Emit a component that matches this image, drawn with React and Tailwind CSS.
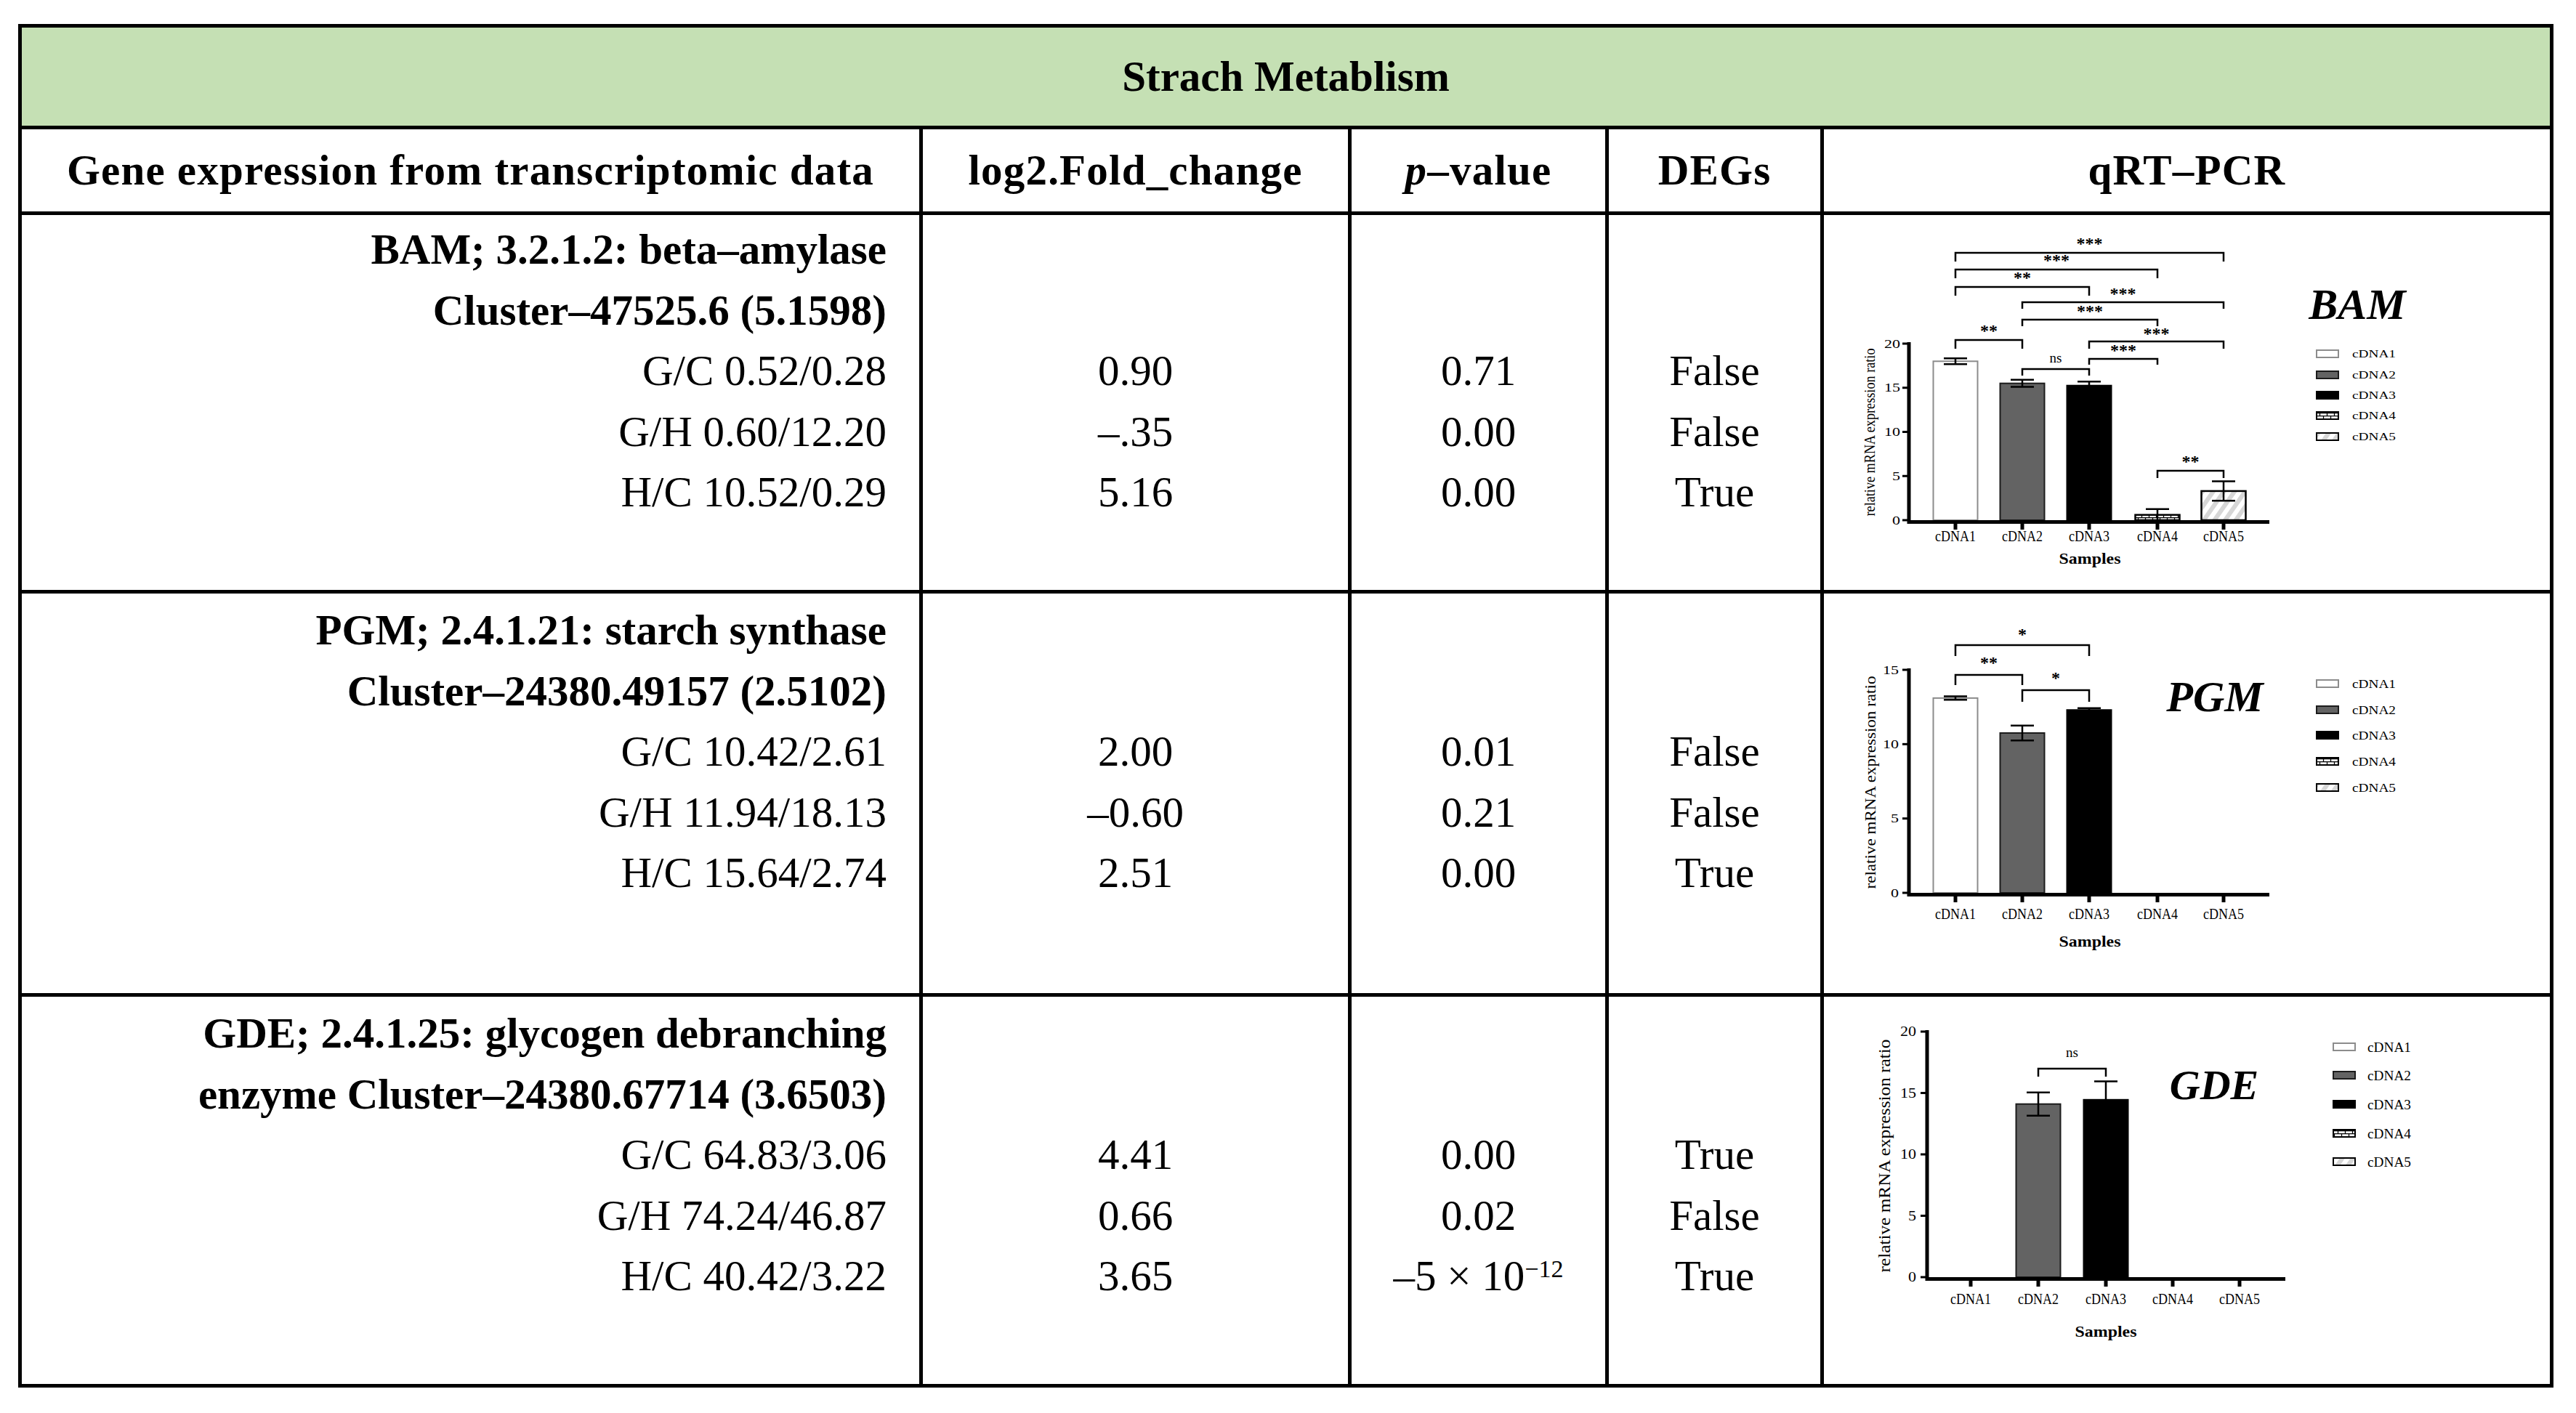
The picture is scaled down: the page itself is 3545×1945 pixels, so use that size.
const serif = "font-['Liberation_Serif',serif]"
const FONT = 'Liberation Serif, serif'

const BAM = {
  id: 'bam', top: 296, h: 516,
  axisX: 2627, xEnd: 3123, y0: 716, yMax: 473, max: 20, ticks: [0, 5, 10, 15, 20], tickRight: 2615, tickSize: 16,
  centers: [2691, 2783, 2875, 2969, 3060],
  values: [18, 15.5, 15.25, 0.6, 3.3],
  errs: [0.33, 0.4, 0.45, 0.65, 1.1],
  xLabelY: 745, labelSize: 20,
  samples: { x: 2876, y: 776, size: 21 },
  yLabel: { x: 2573, y: 595, len: 231, size: 21 },
  title: { text: 'BAM', x: 3244, y: 439, size: 60 },
  legend: { x: 3188, tx: 3237, ys: [487, 516, 544, 572, 601], size: 15 },
  brackets: [
    [0, 4, 348, 360, '***', 332],
    [0, 3, 371, 383, '***', 355],
    [0, 2, 395, 407, '**', 379],
    [1, 4, 416, 425, '***', 401],
    [1, 3, 440, 449, '***', 425],
    [0, 1, 468, 480, '**', 452],
    [2, 4, 470, 480, '***', 456],
    [2, 3, 494, 502, '***', 479],
    [1, 2, 508, 517, 'ns', 494],
    [3, 4, 648, 658, '**', 632],
  ],
}

const PGM = {
  id: 'pgm', top: 817, h: 550,
  axisX: 2627, xEnd: 3123, y0: 1229, yMax: 922, max: 15, ticks: [0, 5, 10, 15], tickRight: 2613, tickSize: 17,
  centers: [2691, 2783, 2875, 2969, 3060],
  values: [13.1, 10.75, 12.3, 0, 0],
  errs: [0.12, 0.5, 0.12, 0, 0],
  xLabelY: 1265, labelSize: 20,
  samples: { x: 2876, y: 1303, size: 21 },
  yLabel: { x: 2573, y: 1077, len: 293, size: 22 },
  title: { text: 'PGM', x: 3048, y: 979, size: 60 },
  legend: { x: 3188, tx: 3237, ys: [941, 977, 1012, 1048, 1084], size: 17 },
  brackets: [
    [0, 2, 888, 903, '*', 870],
    [0, 1, 929, 943, '**', 909],
    [1, 2, 950, 966, '*', 930],
  ],
}

const GDE = {
  id: 'gde', top: 1372, h: 533,
  axisX: 2652, xEnd: 3145, y0: 1758, yMax: 1420, max: 20, ticks: [0, 5, 10, 15, 20], tickRight: 2637, tickSize: 18,
  centers: [2712, 2805, 2898, 2990, 3082],
  values: [0, 14.1, 14.45, 0, 0],
  errs: [0, 0.95, 1.5, 0, 0],
  xLabelY: 1795, labelSize: 21,
  samples: { x: 2898, y: 1840, size: 22 },
  yLabel: { x: 2593, y: 1591, len: 321, size: 23 },
  title: { text: 'GDE', x: 3047, y: 1513, size: 58 },
  legend: { x: 3211, tx: 3258, ys: [1441, 1480, 1520, 1560, 1599], size: 19 },
  brackets: [[1, 2, 1471, 1482, 'ns', 1450]],
}

function barStyle(id, i) {
  return [
    { fill: '#ffffff', stroke: '#8c8c8c', sw: 2 },
    { fill: '#636363', stroke: '#1c1c1c', sw: 2 },
    { fill: '#000000', stroke: '#000000', sw: 2 },
    { fill: `url(#${id}-brick)`, stroke: '#000000', sw: 2.5 },
    { fill: `url(#${id}-hatch)`, stroke: '#000000', sw: 2.5 },
  ][i]
}

function BarChart({ c }) {
  const unit = (c.y0 - c.yMax) / c.max
  const yOf = (v) => c.y0 - v * unit
  const barW = 61

  return (
    <svg width={999} height={c.h} viewBox={`2510 ${c.top} 999 ${c.h}`} className="block" fontFamily={FONT}>
      <defs>
        <pattern id={`${c.id}-brick`} width="10" height="8" patternUnits="userSpaceOnUse">
          <rect width="10" height="8" fill="#ffffff" />
          <path d="M0 0.6H10M0 4.6H10M2.5 0.6V4.6M7.5 4.6V8" stroke="#000" strokeWidth="1.3" />
        </pattern>
        <pattern id={`${c.id}-hatch`} width="12" height="12" patternUnits="userSpaceOnUse" patternTransform="rotate(35)">
          <rect width="12" height="12" fill="#ffffff" />
          <rect width="6" height="12" fill="#d6d6d6" />
        </pattern>
      </defs>

      {/* bars */}
      {c.values.map((v, i) => {
        if (!v) return null
        const s = barStyle(c.id, i)
        const cx = c.centers[i]
        return (
          <rect key={i} x={cx - barW / 2} y={yOf(v)} width={barW} height={c.y0 - yOf(v)}
            fill={s.fill} stroke={s.stroke} strokeWidth={s.sw} />
        )
      })}

      {/* error bars */}
      {c.values.map((v, i) => {
        if (!v) return null
        const cx = c.centers[i]
        const hi = yOf(v + c.errs[i])
        const lo = yOf(v - c.errs[i])
        return (
          <path key={i} d={`M${cx} ${hi}V${lo}M${cx - 16} ${hi}H${cx + 16}M${cx - 16} ${lo}H${cx + 16}`}
            stroke="#000" strokeWidth="2.5" fill="none" />
        )
      })}

      {/* axes */}
      <path d={`M${c.axisX} ${c.yMax - 2}V${c.y0 + 2.5}H${c.xEnd}`} stroke="#000" strokeWidth="5" fill="none" />
      {c.ticks.map((t) => (
        <g key={t}>
          <line x1={c.axisX - 9} x2={c.axisX} y1={yOf(t)} y2={yOf(t)} stroke="#000" strokeWidth="3" />
          <text x={c.tickRight} y={yOf(t)} textAnchor="end" dominantBaseline="central" fontSize={c.tickSize}
            textLength={t >= 10 ? 22 : 11} lengthAdjust="spacingAndGlyphs">{t}</text>
        </g>
      ))}
      {c.centers.map((cx, i) => (
        <g key={i}>
          <line x1={cx} x2={cx} y1={c.y0} y2={c.y0 + 13} stroke="#000" strokeWidth="5" />
          <text x={cx} y={c.xLabelY} textAnchor="middle" fontSize={c.labelSize}
            textLength="56" lengthAdjust="spacingAndGlyphs">{`cDNA${i + 1}`}</text>
        </g>
      ))}
      <text x={c.samples.x} y={c.samples.y} textAnchor="middle" fontSize={c.samples.size} fontWeight="bold"
        textLength="85" lengthAdjust="spacingAndGlyphs">Samples</text>
      <text x={c.yLabel.x} y={c.yLabel.y} textAnchor="middle" dominantBaseline="central" fontSize={c.yLabel.size}
        transform={`rotate(-90 ${c.yLabel.x} ${c.yLabel.y})`} textLength={c.yLabel.len} lengthAdjust="spacingAndGlyphs">
        relative mRNA expression ratio
      </text>

      {/* significance brackets */}
      {c.brackets.map(([a, b, y, leg, label, ly], k) => {
        const x1 = c.centers[a]
        const x2 = c.centers[b]
        const ns = label === 'ns'
        return (
          <g key={k}>
            <path d={`M${x1} ${leg}V${y}H${x2}V${leg}`} stroke="#000" strokeWidth="2.5" fill="none" />
            <text x={(x1 + x2) / 2} y={ns ? ly + 5 : ly + 11} textAnchor="middle"
              fontSize={ns ? 19 : 24} fontWeight={ns ? 'normal' : 'bold'}>{label}</text>
          </g>
        )
      })}

      {/* gene name */}
      <text x={c.title.x} y={c.title.y} textAnchor="middle" fontSize={c.title.size} fontWeight="bold" fontStyle="italic">
        {c.title.text}
      </text>

      {/* legend */}
      {c.legend.ys.map((y, i) => {
        const s = barStyle(c.id, i)
        return (
          <g key={i}>
            <rect x={c.legend.x} y={y - 5} width="30" height="10" fill={s.fill} stroke={s.stroke} strokeWidth="2" />
            <text x={c.legend.tx} y={y} dominantBaseline="central" fontSize={c.legend.size}
              textLength="60" lengthAdjust="spacingAndGlyphs">{`cDNA${i + 1}`}</text>
          </g>
        )
      })}
    </svg>
  )
}

function Line({ children, bold }) {
  return <div className={bold ? 'h-[83.5px] font-bold whitespace-nowrap' : 'h-[83.5px] whitespace-nowrap'}>{children}</div>
}

function DataRow({ height, pt, gene, fold, pval, degs, chart, last }) {
  const cell = 'border-l-[5px] border-black text-center'
  return (
    <div className={`grid grid-cols-[1235px_590px_354px_296px_1004px] ${height} ${last ? '' : 'border-b-[5px] border-black'}`}>
      <div className={`text-right pr-[45px] ${pt}`}>
        {gene.map((g, i) => (
          <Line key={i} bold={i < 2}>{g}</Line>
        ))}
      </div>
      {[fold, pval, degs].map((col, k) => (
        <div key={k} className={`${cell} ${pt}`}>
          <Line />
          <Line />
          {col.map((v, i) => (
            <Line key={i}>{v}</Line>
          ))}
        </div>
      ))}
      <div className="border-l-[5px] border-black">
        <BarChart c={chart} />
      </div>
    </div>
  )
}

export default function App() {
  const head = 'flex items-center justify-center border-l-[5px] border-black'
  return (
    <div className={`min-h-screen bg-white text-black ${serif}`}>
      <div className="ml-[25px] pt-[33px]">
        <div className="w-[3489px] border-[5px] border-black text-[59px] leading-[83.5px]">
          {/* title */}
          <div className="h-[140px] flex items-center justify-center bg-[#c5e0b4] border-b-[5px] border-black font-bold leading-none">
            Strach Metablism
          </div>

          {/* column heads */}
          <div className="grid grid-cols-[1235px_590px_354px_296px_1004px] h-[118px] border-b-[5px] border-black leading-none font-bold tracking-[1.2px]">
            <div className="flex items-center justify-center">Gene expression from transcriptomic data</div>
            <div className={head}>log2.Fold_change</div>
            <div className={head}><i>p</i>–value</div>
            <div className={head}>DEGs</div>
            <div className={head}>qRT–PCR</div>
          </div>

          <DataRow
            height="h-[521px]"
            pt="pt-[6px]"
            gene={['BAM; 3.2.1.2: beta–amylase', 'Cluster–47525.6 (5.1598)', 'G/C 0.52/0.28', 'G/H 0.60/12.20', 'H/C 10.52/0.29']}
            fold={['0.90', '–.35', '5.16']}
            pval={['0.71', '0.00', '0.00']}
            degs={['False', 'False', 'True']}
            chart={BAM}
          />
          <DataRow
            height="h-[555px]"
            pt="pt-[9px]"
            gene={['PGM; 2.4.1.21: starch synthase', 'Cluster–24380.49157 (2.5102)', 'G/C 10.42/2.61', 'G/H 11.94/18.13', 'H/C 15.64/2.74']}
            fold={['2.00', '–0.60', '2.51']}
            pval={['0.01', '0.21', '0.00']}
            degs={['False', 'False', 'True']}
            chart={PGM}
          />
          <DataRow
            height="h-[533px]"
            pt="pt-[9px]"
            last
            gene={['GDE; 2.4.1.25: glycogen debranching', 'enzyme Cluster–24380.67714 (3.6503)', 'G/C 64.83/3.06', 'G/H 74.24/46.87', 'H/C 40.42/3.22']}
            fold={['4.41', '0.66', '3.65']}
            pval={['0.00', '0.02', <span key="p">–5 × 10<sup className="text-[34px] relative -top-[18px]">−12</sup></span>]}
            degs={['True', 'False', 'True']}
            chart={GDE}
          />
        </div>
      </div>
    </div>
  )
}
